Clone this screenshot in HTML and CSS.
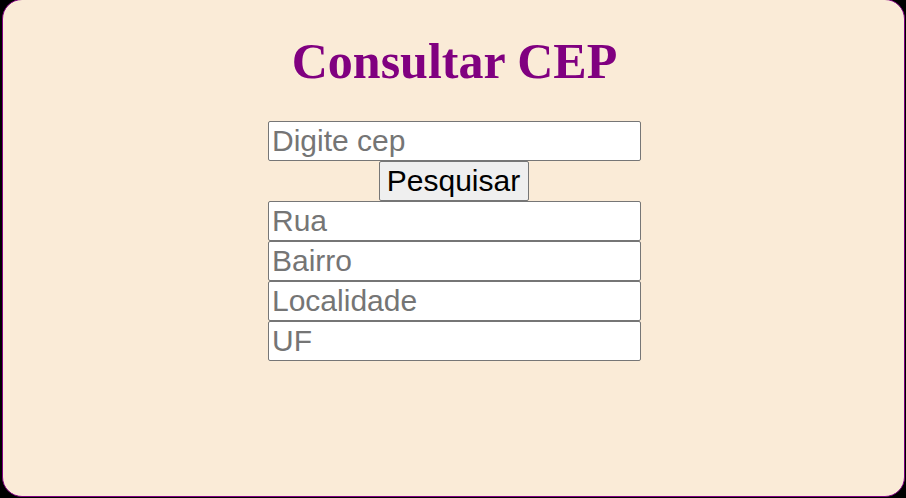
FILE: index.html
```html
<!DOCTYPE html>
<html lang="pt-BR">
<head>
<meta charset="utf-8">
<title>Consultar CEP</title>
<link rel="stylesheet" href="styles.css">
</head>
<body>
<div class="card">
  <h1 class="title">Consultar CEP</h1>
  <form class="form">
    <input class="field" type="text" placeholder="Digite cep">
    <button class="btn" type="button">Pesquisar</button>
    <input class="field" type="text" placeholder="Rua">
    <input class="field" type="text" placeholder="Bairro">
    <input class="field" type="text" placeholder="Localidade">
    <input class="field" type="text" placeholder="UF">
  </form>
</div>
</body>
</html>
```

FILE: styles.css
```css
html, body {
  margin: 0;
  padding: 0;
  background: #000;
  height: 100%;
  overflow: hidden;
}
body {
  padding: 0 1px 1px 2px;
  box-sizing: border-box;
}
.card {
  box-sizing: border-box;
  margin-top: -1px;
  height: calc(100% + 1px);
  background: #faebd7;
  border: 1px solid #800080;
  border-radius: 20px;
  padding-left: 2px;
  display: flex;
  flex-direction: column;
  align-items: center;
}
.title {
  font-family: "Liberation Serif", "Times New Roman", serif;
  font-weight: bold;
  font-size: 50px;
  color: #800080;
  margin: 33px 0 31px;
  line-height: 57px;
}
.form {
  display: flex;
  flex-direction: column;
  align-items: center;
}
.field {
  box-sizing: border-box;
  width: 373px;
  height: 40px;
  font-family: "Liberation Sans", Arial, sans-serif;
  font-size: 30px;
  padding: 1px 3px;
  border: 1px solid #767676;
  border-radius: 2px;
  background: #fff;
  color: #000;
}
.field::placeholder {
  color: #757575;
}
.btn {
  box-sizing: border-box;
  width: 150px;
  height: 40px;
  margin-right: 2px;
  font-family: "Liberation Sans", Arial, sans-serif;
  font-size: 30px;
  padding: 1px 0;
  border: 1px solid #767676;
  border-radius: 2px;
  background: #efefef;
  color: #000;
}
```
